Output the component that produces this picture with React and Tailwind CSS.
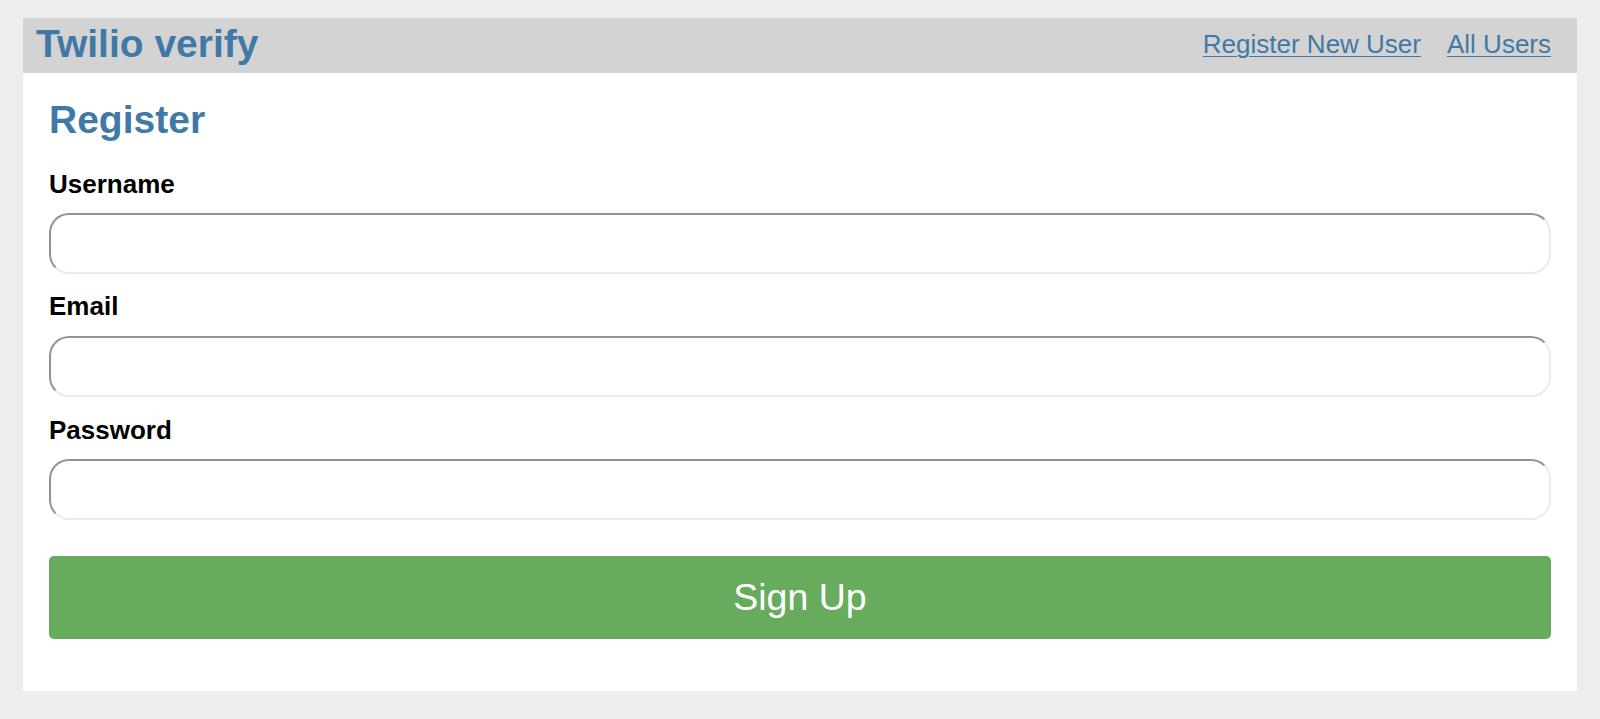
import React from "react";

const font = { fontFamily: '"Liberation Sans", Arial, Helvetica, sans-serif' };

function Field({ label, type, labelMt, inputMt }) {
  return (
    <div>
      <label className={`block font-bold text-[26px] leading-[29px] text-black ${labelMt}`}>{label}</label>
      <input
        type={type}
        className={`block w-full h-[61px] ${inputMt} rounded-[20px] border-2 border-t-[#939393] border-l-[#939393] border-r-[#ebebeb] border-b-[#ebebeb] bg-white outline-none px-3 text-[24px]`}
      />
    </div>
  );
}

export default function App() {
  return (
    <div className="min-h-[719px] bg-[#ededed] pt-[18px] px-[23px]" style={font}>
      <div className="bg-white h-[673px]">
        <header className="h-[55px] bg-[#d3d3d3] flex items-start justify-between pl-[13px] pr-[26px]">
          <h1 className="text-[39px] leading-[52px] font-bold text-[#4179a6]">Twilio verify</h1>
          <nav className="flex gap-[26px] text-[26px] leading-[52px] text-[#4179a6]">
            <a href="#" className="underline underline-offset-[3px] decoration-1">Register New User</a>
            <a href="#" className="underline underline-offset-[3px] decoration-1">All Users</a>
          </nav>
        </header>
        <main className="px-[26px]">
          <h2 className="mt-[25px] text-[39px] leading-[44px] font-bold text-[#4179a6]">Register</h2>
          <form onSubmit={(e) => e.preventDefault()}>
            <Field label="Username" type="text" labelMt="mt-[28px]" inputMt="mt-[14px]" />
            <Field label="Email" type="email" labelMt="mt-[18px]" inputMt="mt-[15px]" />
            <Field label="Password" type="password" labelMt="mt-[19px]" inputMt="mt-[14px]" />
            <button
              type="submit"
              className="mt-[36px] w-full h-[83px] rounded-[5px] bg-[#67ac5c] text-white text-[37.5px] leading-none flex items-center justify-center"
            >
              Sign Up
            </button>
          </form>
        </main>
      </div>
    </div>
  );
}
